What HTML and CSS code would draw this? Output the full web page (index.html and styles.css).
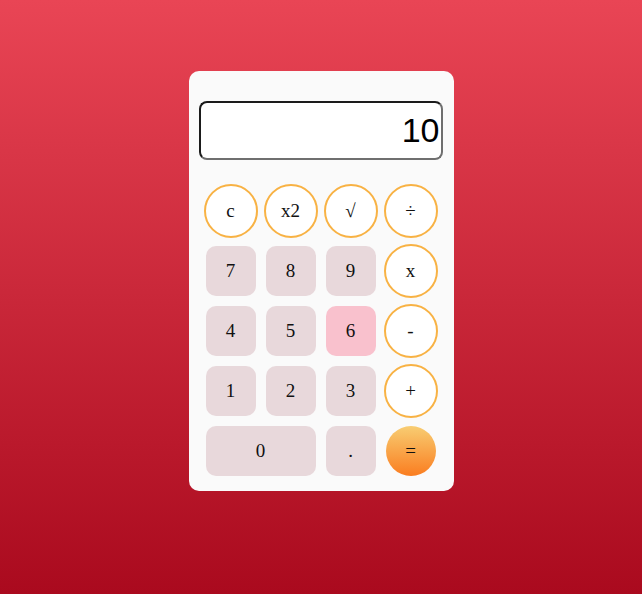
FILE: index.html
```html
<!DOCTYPE html>
<html lang="en">
<head>
<meta charset="utf-8">
<title>Calculator</title>
<link rel="stylesheet" href="styles.css">
</head>
<body>
<div class="calc">
  <input class="display" type="text" value="10" readonly>
  <div class="keys">
    <button class="key op">c</button>
    <button class="key op">x2</button>
    <button class="key op">√</button>
    <button class="key op">÷</button>
    <button class="key num">7</button>
    <button class="key num">8</button>
    <button class="key num">9</button>
    <button class="key op">x</button>
    <button class="key num">4</button>
    <button class="key num">5</button>
    <button class="key num active">6</button>
    <button class="key op">-</button>
    <button class="key num">1</button>
    <button class="key num">2</button>
    <button class="key num">3</button>
    <button class="key op">+</button>
    <button class="key num wide">0</button>
    <button class="key num">.</button>
    <button class="key eq">=</button>
  </div>
</div>
</body>
</html>
```
FILE: styles.css
```css
html {
  height: 100%;
}
body {
  margin: 0;
  min-height: 100%;
  background: linear-gradient(to bottom, #e94555 0%, #aa0a1e 100%);
  font-family: "Liberation Serif", "Times New Roman", serif;
  display: flex;
  justify-content: center;
  align-items: flex-start;
}
.calc {
  margin-top: 71px;
  width: 265px;
  box-sizing: border-box;
  padding: 30px 10px 15px 10px;
  background: #fafafa;
  border-radius: 10px;
}
.display {
  display: block;
  box-sizing: border-box;
  width: 244px;
  height: 59px;
  margin: 0;
  padding: 1px 1px 1px 2px;
  border: 2px solid #767676;
  border-top-color: #1b1b1b;
  border-left-color: #1b1b1b;
  border-right-color: #6f6f6f;
  border-bottom-color: #6f6f6f;
  border-radius: 8px;
  background: #fff;
  font-family: "Liberation Sans", Arial, sans-serif;
  font-size: 34px;
  text-align: right;
  color: #000;
  outline: none;
}
.keys {
  margin-top: 26px;
  padding-left: 7px;
  display: grid;
  grid-template-columns: repeat(4, 50px);
  grid-auto-rows: 50px;
  gap: 10px;
}
.key {
  width: 50px;
  height: 50px;
  padding: 0;
  margin: 0;
  border: none;
  font-family: "Liberation Serif", "Times New Roman", serif;
  font-size: 19px;
  color: #111;
  display: flex;
  align-items: center;
  justify-content: center;
}
.num {
  background: #e8d8db;
  border-radius: 10px;
}
.num.active {
  background: #f9c1cd;
}
.wide {
  grid-column: span 2;
  width: 110px;
}
.op {
  box-sizing: content-box;
  border: 2px solid #f8b244;
  border-radius: 50%;
  background: #fff;
  margin: -2px;
}
.eq {
  border-radius: 50%;
  background: linear-gradient(to bottom, #f8cd72 0%, #fa7d20 100%);
}
```
